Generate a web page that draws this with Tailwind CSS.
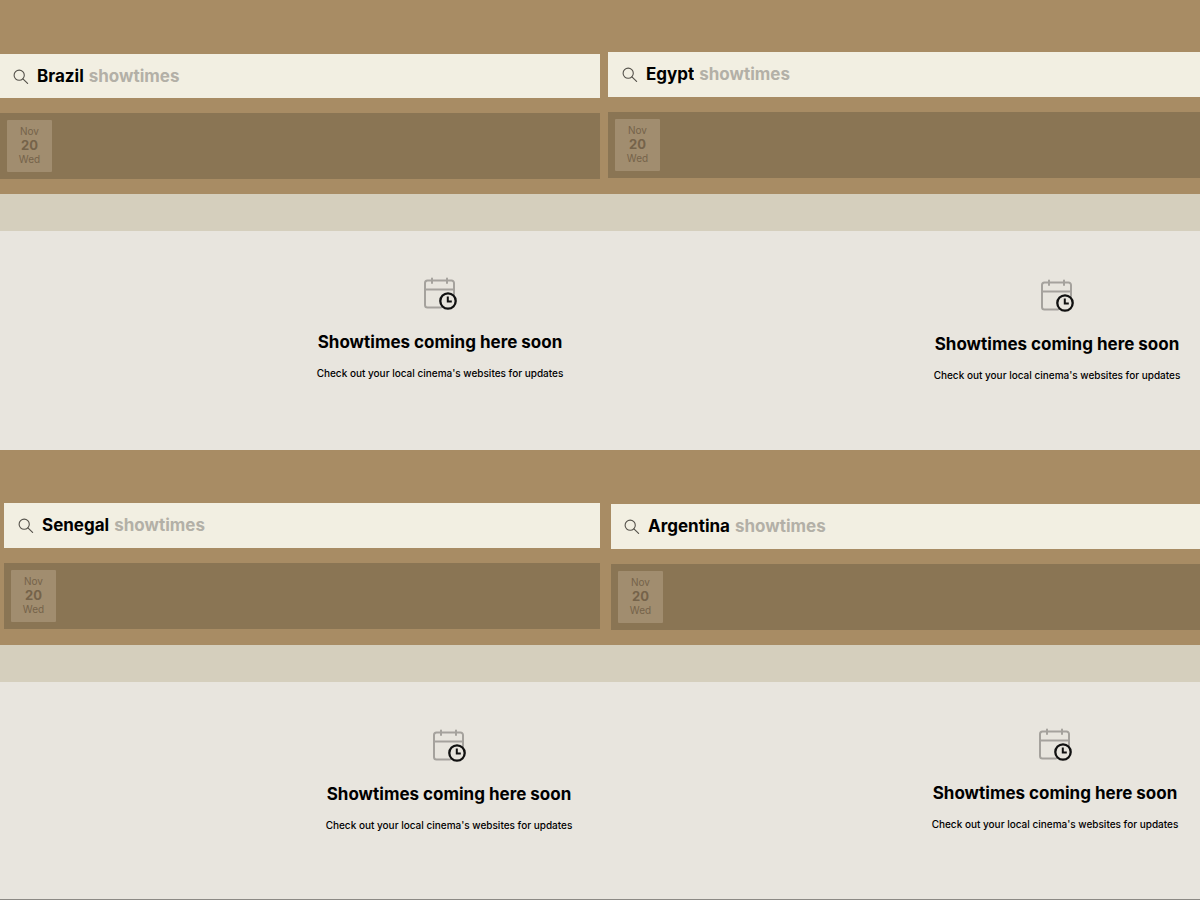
<!DOCTYPE html>
<html lang="en">
<head>
  <meta charset="UTF-8">
  <meta name="viewport" content="width=device-width, initial-scale=1.0">
  <title>Showtimes</title>
  <script src="https://cdn.jsdelivr.net/npm/@tailwindcss/browser@4"></script>
</head>
<body class="bg-[#e8e5de] font-['Inter','Open_Sans',sans-serif] text-black">
  <!-- shared icons -->
  <svg class="hidden">
    <symbol id="icon-search" viewBox="0 0 16 16">
      <circle cx="6.2" cy="6.2" r="5.1" fill="none" stroke="currentColor" stroke-width="1.1" />
      <path d="M9.9 9.9 14.6 14.4" fill="none" stroke="currentColor" stroke-width="1.2" stroke-linecap="round" />
    </symbol>
    <symbol id="icon-calendar" viewBox="0 0 34 34">
      <path d="M18 30.5H4.500A2.500 2.500 0 0 1 2 28V6A2.500 2.500 0 0 1 4.500 3.500h24A2.500 2.500 0 0 1 31 6V17M2 12.500h29M9 1.500v4.500M24 1.500v4.500" fill="none" stroke="#a5a29d" stroke-width="2" stroke-linecap="round" />
      <circle cx="25" cy="24" r="7.700" fill="#e8e5de" stroke="#111" stroke-width="2.300" />
      <path d="M24.800 19.500v5h4" fill="none" stroke="#111" stroke-width="2" />
    </symbol>
  </svg>

  <main class="grid min-h-screen grid-cols-2 grid-rows-2 border-b border-[#8b8984]">
    <section class="flex flex-col">
      <div class="bg-[#a88c64] pt-[54px] pb-[15px]">
        <label class="flex h-11 items-center bg-[#f2efe2] pt-0.5 pl-[13px] text-[17px]">
          <svg class="mr-2 size-4 text-[#55524b]"><use href="#icon-search" /></svg>
          <input type="text" value="Brazil" aria-label="Country" class="field-sizing-content font-bold outline-none">
          <span class="ml-[5px] font-bold text-[#b3b0a7]">showtimes</span>
        </label>
        <div class="mt-[15px] bg-[#8a7554] p-[7px]">
          <button class="block w-[45px] rounded-[1px] bg-[#a18d6f] pt-1 pb-1.5 text-center text-[10px] leading-[14px] text-[#75634a]">
            Nov<b class="block text-[13px] leading-[14px]">20</b>Wed
          </button>
        </div>
      </div>
      <div class="h-[37px] bg-[#d5cfbd]"></div>
      <div class="flex flex-1 flex-col items-center pt-[46px] pl-[280px] text-center">
        <svg class="size-[34px]"><use href="#icon-calendar" /></svg>
        <h2 class="mt-[19px] text-[17px] leading-6 font-bold whitespace-nowrap">Showtimes coming here soon</h2>
        <p class="mt-[11px] text-[10px] leading-4 font-medium whitespace-nowrap">Check out your local cinema's websites for updates</p>
      </div>
    </section>

    <section class="flex flex-col">
      <div class="bg-[#a88c64] pt-[52px] pb-4 pl-2">
        <label class="flex h-[45px] items-center bg-[#f2efe2] pl-[14px] text-[17px]">
          <svg class="mr-2 size-4 text-[#55524b]"><use href="#icon-search" /></svg>
          <input type="text" value="Egypt" aria-label="Country" class="field-sizing-content font-bold outline-none">
          <span class="ml-[5px] font-bold text-[#b3b0a7]">showtimes</span>
        </label>
        <div class="mt-[15px] bg-[#8a7554] p-[7px]">
          <button class="block w-[45px] rounded-[1px] bg-[#a18d6f] pt-1 pb-1.5 text-center text-[10px] leading-[14px] text-[#75634a]">
            Nov<b class="block text-[13px] leading-[14px]">20</b>Wed
          </button>
        </div>
      </div>
      <div class="h-[37px] bg-[#d5cfbd]"></div>
      <div class="flex flex-1 flex-col items-center pt-12 pl-[314px] text-center">
        <svg class="size-[34px]"><use href="#icon-calendar" /></svg>
        <h2 class="mt-[19px] text-[17px] leading-6 font-bold whitespace-nowrap">Showtimes coming here soon</h2>
        <p class="mt-[11px] text-[10px] leading-4 font-medium whitespace-nowrap">Check out your local cinema's websites for updates</p>
      </div>
    </section>

    <section class="flex flex-col">
      <div class="bg-[#a88c64] pt-[53px] pb-4 pl-1">
        <label class="flex h-[45px] items-center bg-[#f2efe2] pt-0.5 pl-[14px] text-[17px]">
          <svg class="mr-2 size-4 text-[#55524b]"><use href="#icon-search" /></svg>
          <input type="text" value="Senegal" aria-label="Country" class="field-sizing-content font-bold outline-none">
          <span class="ml-[5px] font-bold text-[#b3b0a7]">showtimes</span>
        </label>
        <div class="mt-[15px] bg-[#8a7554] p-[7px]">
          <button class="block w-[45px] rounded-[1px] bg-[#a18d6f] pt-1 pb-1.5 text-center text-[10px] leading-[14px] text-[#75634a]">
            Nov<b class="block text-[13px] leading-[14px]">20</b>Wed
          </button>
        </div>
      </div>
      <div class="h-[37px] bg-[#d5cfbd]"></div>
      <div class="flex flex-1 flex-col items-center pt-[47px] pl-[298px] text-center">
        <svg class="size-[34px]"><use href="#icon-calendar" /></svg>
        <h2 class="mt-[19px] text-[17px] leading-6 font-bold whitespace-nowrap">Showtimes coming here soon</h2>
        <p class="mt-[11px] text-[10px] leading-4 font-medium whitespace-nowrap">Check out your local cinema's websites for updates</p>
      </div>
    </section>

    <section class="flex flex-col">
      <div class="bg-[#a88c64] pt-[54px] pb-[15px] pl-[11px]">
        <label class="flex h-[45px] items-center bg-[#f2efe2] pt-0.5 pl-[13px] text-[17px]">
          <svg class="mr-2 size-4 text-[#55524b]"><use href="#icon-search" /></svg>
          <input type="text" value="Argentina" aria-label="Country" class="field-sizing-content font-bold outline-none">
          <span class="ml-[5px] font-bold text-[#b3b0a7]">showtimes</span>
        </label>
        <div class="mt-[15px] bg-[#8a7554] p-[7px]">
          <button class="block w-[45px] rounded-[1px] bg-[#a18d6f] pt-1 pb-1.5 text-center text-[10px] leading-[14px] text-[#75634a]">
            Nov<b class="block text-[13px] leading-[14px]">20</b>Wed
          </button>
        </div>
      </div>
      <div class="h-[37px] bg-[#d5cfbd]"></div>
      <div class="flex flex-1 flex-col items-center pt-[46px] pl-[310px] text-center">
        <svg class="size-[34px]"><use href="#icon-calendar" /></svg>
        <h2 class="mt-[19px] text-[17px] leading-6 font-bold whitespace-nowrap">Showtimes coming here soon</h2>
        <p class="mt-[11px] text-[10px] leading-4 font-medium whitespace-nowrap">Check out your local cinema's websites for updates</p>
      </div>
    </section>
  </main>
</body>
</html>
